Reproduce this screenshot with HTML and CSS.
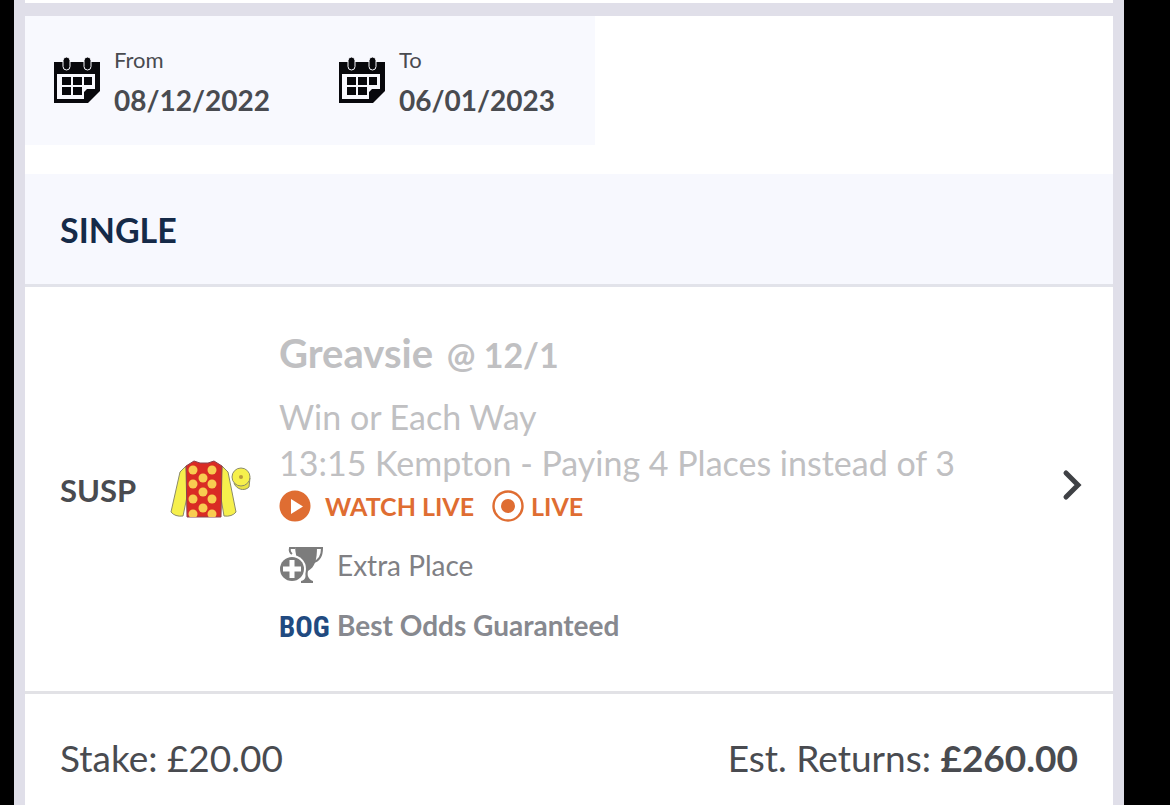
FILE: index.html
```html
<!DOCTYPE html>
<html lang="en">
<head>
<meta charset="utf-8">
<title>Open bets</title>
<meta name="viewport" content="width=device-width, initial-scale=1">
<link rel="stylesheet" href="styles.css">
</head>
<body>
<svg class="defs" aria-hidden="true">
  <symbol id="calendar" viewBox="0 0 48 48">
    <path fill="#08080c" d="M1 5h46v29L35 46H1z"/>
    <path fill="#f9f9fe" d="M4 17h38v15h-8l-3 3v7H4z"/>
    <path fill="#08080c" d="M9 20h9v8H9zM20 20h9v8h-9zM31 20h8v8h-8zM9 30h9v8H9zM20 30h9v8h-9z"/>
    <g fill="#08080c" stroke="#f9f9fe" stroke-width="1"><rect x="10" y="0" width="7" height="13" rx="3.5"/><rect x="31" y="0" width="7" height="13" rx="3.5"/></g>
  </symbol>
</svg>
<main class="frame">
  <div class="previous"></div>
  <section class="card">
    <div class="dates">
      <button class="date" type="button">
        <svg class="calendar" aria-hidden="true"><use href="#calendar"/></svg>
        <span class="date-text"><span class="date-label">From</span><span class="date-value">08/12/2022</span></span>
      </button>
      <button class="date" type="button">
        <svg class="calendar" aria-hidden="true"><use href="#calendar"/></svg>
        <span class="date-text"><span class="date-label">To</span><span class="date-value">06/01/2023</span></span>
      </button>
    </div>
    <h1 class="bet-type">SINGLE</h1>
    <article class="bet">
      <strong class="status">SUSP</strong>
      <svg class="silks" viewBox="0 0 84 64" aria-hidden="true">
        <defs>
          <clipPath id="body"><path d="M18 8l8-5 6 2h8l6-2 8 5-1 51H19z"/></clipPath>
        </defs>
        <path d="M18 8L12 14 3 54q4 5 12 4l5-24z" fill="#f6f04c" stroke="#8b8b6a"/>
        <path d="M54 8l6 6 8 40q-4 5-12 4l-4-24z" fill="#f6f04c" stroke="#8b8b6a"/>
        <path d="M18 8l8-5 6 2h8l6-2 8 5-1 51H19z" fill="#d92b24" stroke="#8a4450"/>
        <g fill="#f8cc50" clip-path="url(#body)">
          <circle cx="25" cy="12" r="4.5"/><circle cx="44" cy="12" r="4.5"/><circle cx="35" cy="20" r="4.5"/>
          <circle cx="25" cy="26" r="4.5"/><circle cx="44" cy="26" r="4.5"/><circle cx="35" cy="34" r="4.5"/>
          <circle cx="25" cy="41" r="4.5"/><circle cx="44" cy="41" r="4.5"/><circle cx="35" cy="50" r="4.5"/>
          <circle cx="25" cy="56" r="4.5"/><circle cx="44" cy="56" r="4.5"/>
        </g>
        <path d="M66 25c2 6 10 9 15 4l1-9z" fill="#e9e344" stroke="#8b8b6a"/>
        <circle cx="73" cy="19" r="9" fill="#f6f04c" stroke="#8b8b6a"/>
        <circle cx="73" cy="19" r="2" fill="#b99a3d"/>
      </svg>
      <div class="details">
        <h2 class="selection">Greavsie <span class="odds">@ 12/1</span></h2>
        <p class="market">Win or Each Way<br>13:15 Kempton - Paying 4 Places instead of 3</p>
        <div class="live">
          <a class="live-link" href="#watch">
            <svg class="dot" viewBox="0 0 32 32" aria-hidden="true"><circle cx="16" cy="16" r="15.5" fill="#df6d32"/><path d="M12 9v15l12-7.5z" fill="#fff"/></svg>
            WATCH LIVE
          </a>
          <span class="live-now">
            <svg class="dot" viewBox="0 0 32 32" aria-hidden="true"><circle cx="16" cy="16" r="14.5" fill="#fff" stroke="#df6d32" stroke-width="2.4"/><circle cx="16" cy="16" r="7" fill="#df6d32"/></svg>
            LIVE
          </span>
        </div>
        <div class="offer">
          <svg class="badge" viewBox="0 0 50 36" aria-hidden="true">
            <path d="M16 0h22c0 13-2 20-9 24-1 4 0 8 5 10v2H22v-2c5-1 5-5 4-9-5-3-9-12-10-25z" fill="#7c7c7c"/>
            <path d="M16 1h-5q-1 4 2 6M37 1h6c0 9-3 13-9 14" fill="none" stroke="#7c7c7c" stroke-width="2"/>
            <circle cx="13" cy="22" r="14" fill="#fff"/><circle cx="13" cy="22" r="12" fill="#7c7c7c"/>
            <path d="M13 13v18M4 22h18" stroke="#fff" stroke-width="5"/>
          </svg>
          <span>Extra Place</span>
        </div>
        <div class="offer offer-strong"><span class="badge bog">BOG</span><span>Best Odds Guaranteed</span></div>
      </div>
      <button class="open" type="button" aria-label="Bet details">
        <svg class="chevron" viewBox="0 0 24 34" aria-hidden="true"><path d="M5 5l12 12L5 29" fill="none" stroke="#3f4145" stroke-width="5" stroke-linecap="round"/></svg>
      </button>
    </article>
    <footer class="totals"><span>Stake: £20.00</span><span>Est. Returns: <strong>£260.00</strong></span></footer>
  </section>
</main>
</body>
</html>
```
FILE: styles.css
```css
* { box-sizing: border-box; }
body {
  margin: 0;
  background: #000;
  color: #494b50;
  font-family: Lato, "Liberation Sans", sans-serif;
}
button {
  border: 0;
  padding: 0;
  background: none;
  color: inherit;
  font: inherit;
  text-align: left;
}
h1, h2, p { margin: 0; }
.defs { position: absolute; width: 0; height: 0; }
.frame {
  display: flex;
  flex-direction: column;
  min-height: 100vh;
  margin: 0 46px 0 14px;
  padding: 0 11px;
  background: #e0dfe9;
}
.previous { height: 3px; margin-bottom: 13px; background: #fff; }
.card { flex: 1; background: #fff; }
.dates {
  display: grid;
  grid-template-columns: 1fr 1fr;
  width: 570px;
  max-width: 100%;
  padding: 31px 0 28px 28px;
  background: #f8f9fe;
}
.date { display: flex; gap: 13px; padding-right: 12px; }
.date:last-child { padding-left: 14px; }
.calendar { width: 48px; height: 48px; margin-top: 10px; }
.date-text { display: flex; flex-direction: column; }
.date-label { font-size: 22px; line-height: 26px; }
.date-value { margin-top: 10px; font-size: 28px; line-height: 34px; font-weight: 700; }
.bet-type {
  margin-top: 29px;
  padding: 36px 35px 34px;
  border-bottom: 3px solid #e2e3ea;
  background: #f7f8fe;
  color: #152a48;
  font-size: 34px;
  line-height: 40px;
  font-weight: 700;
}
.bet {
  display: flex;
  align-items: center;
  padding: 43px 28px 42px 35px;
  border-bottom: 3px solid #e2e2e6;
}
.status { width: 108px; font-size: 31px; line-height: 36px; }
.silks { flex: none; width: 84px; height: 64px; }
.details { flex: 1; margin-left: 27px; padding-bottom: 6px; }
.selection { color: #c0c0c2; font-size: 40px; line-height: 46px; }
.odds { margin-left: 4px; font-size: 34px; }
.market { margin-top: 16px; color: #c0c0c2; font-size: 34px; line-height: 46px; }
.live {
  display: flex;
  gap: 18px;
  margin-top: 3px;
  color: #df6d32;
  font-size: 25px;
  line-height: 34px;
  font-weight: 700;
}
.live-link, .live-now { display: flex; align-items: center; color: inherit; text-decoration: none; }
.live-link { gap: 14px; }
.live-now { gap: 7px; }
.dot { width: 32px; height: 32px; }
.offer {
  display: flex;
  align-items: center;
  gap: 8px;
  margin-top: 24px;
  color: #808084;
  font-size: 28px;
  line-height: 36px;
}
.offer-strong { font-weight: 700; color: #87898f; }
.badge { width: 50px; height: 36px; }
.bog {
  color: #214a80;
  font-family: "Roboto Condensed", Roboto, sans-serif;
  font-size: 29px;
  line-height: 40px;
}
.open { margin-bottom: 10px; }
.chevron { display: block; width: 24px; height: 34px; }
.totals {
  display: flex;
  justify-content: space-between;
  padding: 42px 35px 24px;
  font-size: 37px;
  line-height: 44px;
}
```
